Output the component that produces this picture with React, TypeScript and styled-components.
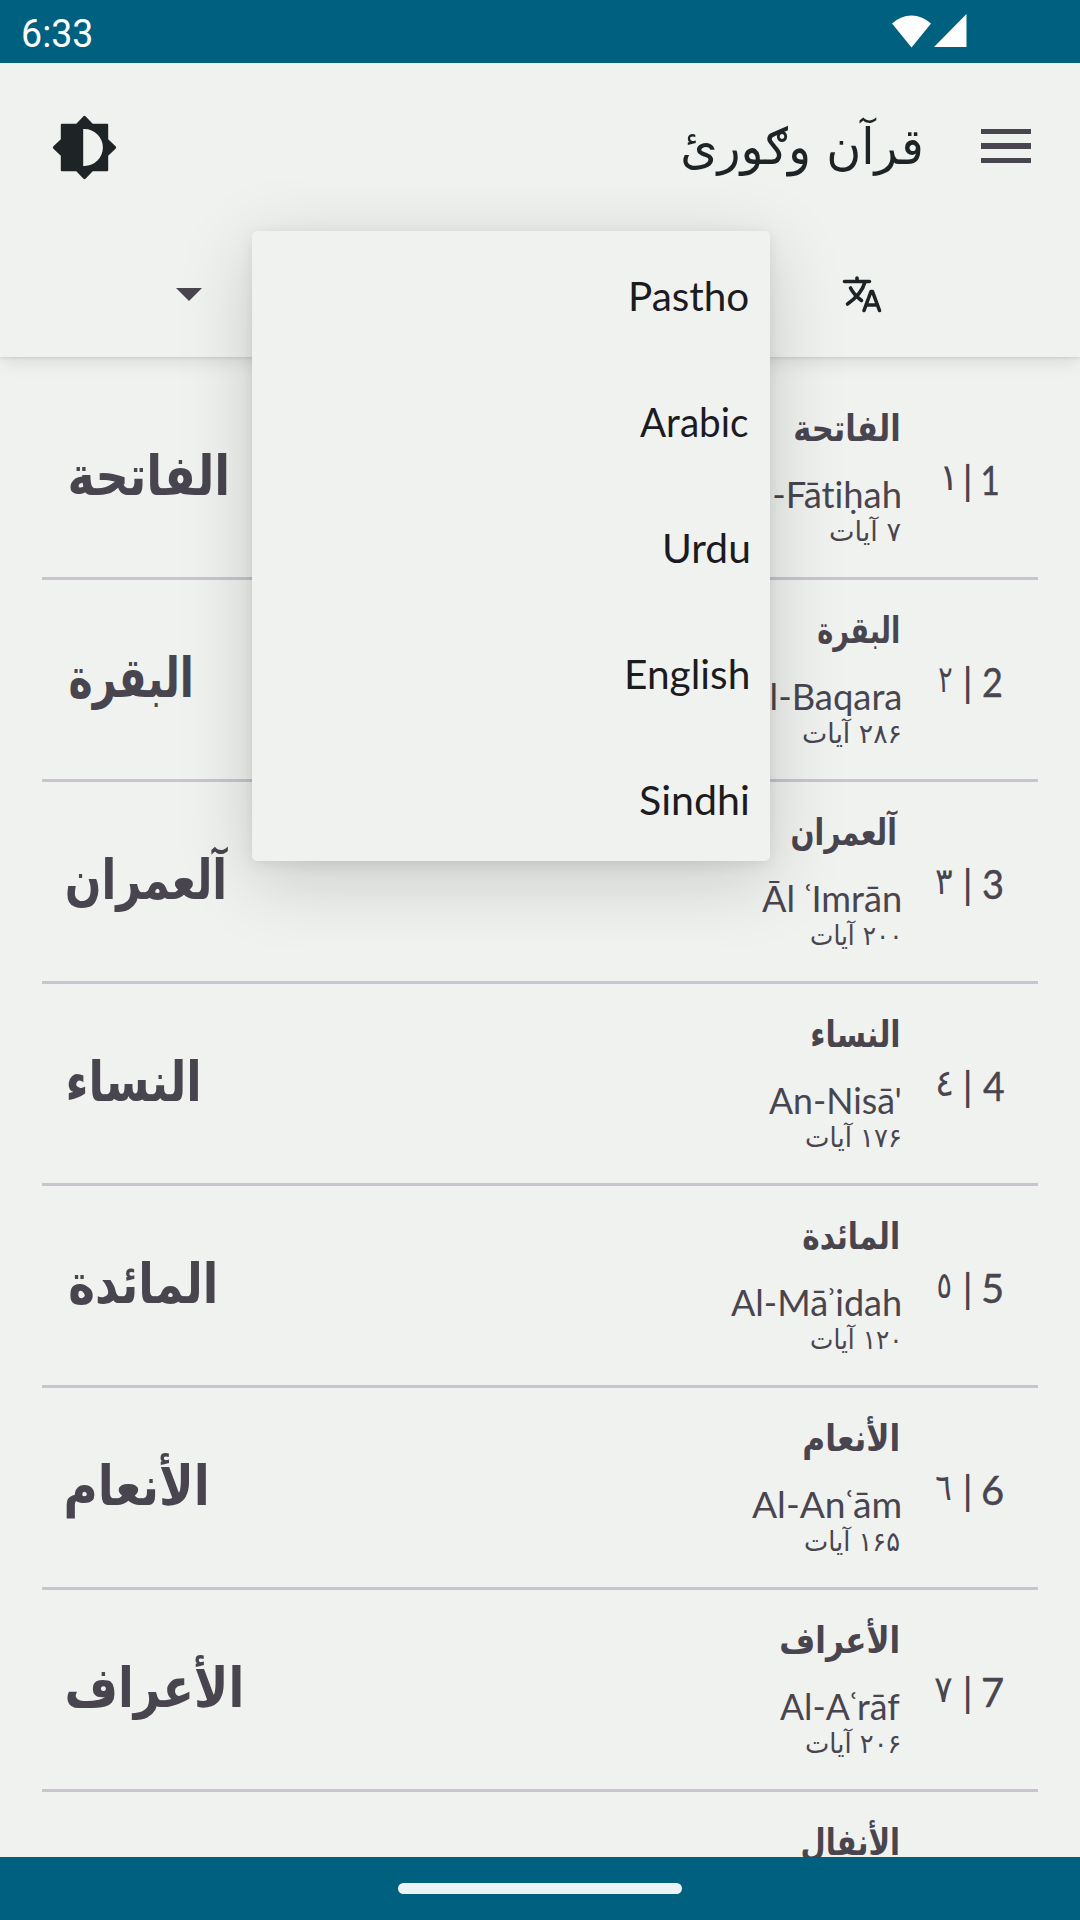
import React, { useLayoutEffect, useRef, useState } from 'react';
import styled, { createGlobalStyle } from 'styled-components';

const LATIN = `Lato, 'Noto Sans', sans-serif`;
const ARABIC = `'DejaVu Sans', sans-serif`;
const INK = '#49454f';
const DARK = '#1e2426';

const GlobalStyle = createGlobalStyle`
  * { box-sizing: border-box; }
  html, body { margin: 0; padding: 0; background: #f0f2ef; }
`;

const Screen = styled.div`
  width: 1080px;
  height: 1920px;
  display: flex;
  flex-direction: column;
  overflow: hidden;
  background: #f0f2ef;
  position: relative;
`;

const StatusBar = styled.header`
  height: 63px;
  flex: none;
  display: flex;
  align-items: flex-start;
  justify-content: space-between;
  padding: 0 113px 0 23px;
  background: #00607f;
  color: #fff;
  z-index: 2;
`;

const Clock = styled.div`
  font: 400 39px/68px Roboto, sans-serif;
`;

const StatusIcons = styled.div`
  display: flex;
  gap: 3px;
  padding-top: 14px;
`;

const AppHeader = styled.section`
  height: 294px;
  flex: none;
  background: #f0f2ef;
  box-shadow: 0 2px 20px rgba(0, 0, 0, 0.12), 0 1px 3px rgba(0, 0, 0, 0.1);
  z-index: 1;
`;

const TitleBar = styled.div`
  height: 168px;
  display: flex;
  align-items: center;
  padding: 0 49px 0 52px;
`;

const Title = styled.h1`
  margin: 0 60px 0 auto;
  font: 400 50px/60px ${ARABIC};
  color: ${DARK};
`;

const MenuIcon = styled.div`
  display: flex;
  flex-direction: column;
  gap: 9px;
  padding-bottom: 2px;
`;

const MenuLine = styled.span`
  width: 50px;
  height: 5.2px;
  background: ${INK};
`;

const FilterBar = styled.div`
  height: 126px;
  display: flex;
  align-items: center;
  justify-content: space-between;
  padding: 0 198px 0 175.5px;
`;

const Dropdown = styled.div`
  position: absolute;
  left: 252px;
  top: 231px;
  width: 518px;
  border-radius: 5px;
  background: #f0f2ef;
  box-shadow: 0 18px 74px rgba(0, 0, 0, 0.17), 0 3px 14px rgba(0, 0, 0, 0.08);
  z-index: 3;
`;

const Option = styled.div`
  height: 126px;
  display: flex;
  align-items: center;
  justify-content: flex-end;
  padding: 3px 22px 0 0;
  font: 400 41px/50px ${LATIN};
  color: #1c1b1f;
`;

const List = styled.main`
  flex: 1;
  min-height: 0;
  overflow: hidden;
  padding: 21px 42px 0;
`;

const Row = styled.article`
  height: 202px;
  display: flex;
  align-items: flex-start;
  justify-content: flex-end;
  border-bottom: 3px solid #c9c4d0;
  color: ${INK};
`;

const BigName = styled.div<{ $indent: number }>`
  flex: 1;
  padding: 64px 0 0 ${(p) => p.$indent}px;
  font: 700 55px/68px ${ARABIC};
`;

const Details = styled.div`
  display: flex;
  flex-direction: column;
  align-items: flex-end;
  padding-right: 1px;
`;

const ShortName = styled.div`
  padding: 26px 2px 0 0;
  font: 700 36.5px/50px ${ARABIC};
`;

const Translit = styled.div`
  margin-top: 15px;
  font: 400 36px/50px ${LATIN};
  font-variant-ligatures: none;
`;

const Verses = styled.div<{ $shift: number }>`
  margin-top: -10px;
  padding-right: ${(p) => p.$shift}px;
  font: 400 27px/46px ${ARABIC};
`;

const NumberCell = styled.div`
  width: 137px;
  display: grid;
  grid-template-columns: 51px 14px 1fr;
  column-gap: 4px;
  padding-top: 74px;
  font: 400 40px/56px ${LATIN};
`;

const ArabicDigit = styled.div<{ $shift: number }>`
  justify-self: end;
  padding-right: ${(p) => p.$shift}px;
  font: 400 37px/56px ${ARABIC};
  margin-top: -2px;
`;

const Bar = styled.div`
  padding-left: 9.5px;
  font-weight: 700;
`;

const Digit = styled.div`
  padding-left: 9px;
  -webkit-text-stroke: 0.4px ${INK};
`;

const NavBar = styled.footer`
  height: 63px;
  flex: none;
  display: flex;
  justify-content: center;
  padding-top: 26px;
  background: #00607f;
  z-index: 1;
`;

const Handle = styled.div`
  width: 284px;
  height: 11px;
  border-radius: 6px;
  background: #ebf3f6;
`;

const FitBox = styled.span`
  display: inline-block;
  direction: ltr;
  white-space: nowrap;
  vertical-align: top;
`;

const FitText = styled.span`
  display: inline-block;
  width: max-content;
  transform-origin: 0 50%;
`;

/** A line of text stretched horizontally so that its glyphs span `width` pixels. */
function Fit({ width, rtl, children }: { width: number; rtl?: boolean; children: string }) {
  const ref = useRef<HTMLSpanElement>(null);
  const [fit, setFit] = useState({ scale: 1, shift: 0 });
  useLayoutEffect(() => {
    const el = ref.current;
    const ctx = document.createElement('canvas').getContext('2d');
    if (!el || !ctx) return;
    const cs = getComputedStyle(el);
    ctx.font = `${cs.fontWeight} ${cs.fontSize} ${cs.fontFamily}`;
    ctx.direction = rtl ? 'rtl' : 'ltr';
    ctx.textAlign = 'left';
    const m = ctx.measureText(children);
    const ink = m.actualBoundingBoxLeft + m.actualBoundingBoxRight;
    if (ink > 0) setFit({ scale: width / ink, shift: m.actualBoundingBoxLeft });
  }, [width, rtl, children]);
  return (
    <FitBox style={{ width }}>
      <FitText ref={ref} dir={rtl ? 'rtl' : 'ltr'} style={{ transform: `scaleX(${fit.scale}) translateX(${fit.shift}px)` }}>
        {children}
      </FitText>
    </FitBox>
  );
}

const options = [
  { label: 'Pastho', w: 117 },
  { label: 'Arabic', w: 108 },
  { label: 'Urdu', w: 83 },
  { label: 'English', w: 121.5 },
  { label: 'Sindhi', w: 108 },
];

interface Surah {
  name: string;
  sw: number;
  full?: {
    n: string; nw: number;
    an: string; aw: number; as: number;
    bx: number; bw: number;
    tr: string; tw: number;
    v: string; vw: number; vs: number;
  };
}

const surahs: Surah[] = [
  { name: 'الفاتحة', sw: 103.5, full: { n: '1', nw: 15, an: '١', aw: 8, as: 0, bx: 70, bw: 157, tr: 'Al-Fātiḥah', tw: 161.5, v: '۷ آیات', vw: 70.5, vs: 0 } },
  { name: 'البقرة', sw: 80.5, full: { n: '2', nw: 18, an: '٢', aw: 13, as: 0, bx: 69.5, bw: 121, tr: 'Al-Baqara', tw: 155.5, v: '۲۸۶ آیات', vw: 97.5, vs: 0 } },
  { name: 'آلعمران', sw: 106, full: { n: '3', nw: 19, an: '٣', aw: 16, as: 0, bx: 67, bw: 161, tr: 'Āl ʿImrān', tw: 138, v: '۲۰۰ آیات', vw: 86.5, vs: 2.5 } },
  { name: 'النساء', sw: 86.5, full: { n: '4', nw: 21.5, an: '٤', aw: 13.5, as: 1, bx: 68, bw: 130.5, tr: "An-Nisā'", tw: 131.5, v: '۱۷۶ آیات', vw: 94.5, vs: 0 } },
  { name: 'المائدة', sw: 95, full: { n: '5', nw: 19, an: '٥', aw: 12.5, as: 2, bx: 69.5, bw: 145, tr: 'Al-Māʾidah', tw: 169, v: '۱۲۰ آیات', vw: 86.5, vs: 2.5 } },
  { name: 'الأنعام', sw: 94, full: { n: '6', nw: 20, an: '٦', aw: 15, as: 1, bx: 66, bw: 140.5, tr: 'Al-Anʿām', tw: 148.5, v: '۱۶۵ آیات', vw: 94.5, vs: 1 } },
  { name: 'الأعراف', sw: 117, full: { n: '7', nw: 20, an: '٧', aw: 17, as: -1, bx: 66.5, bw: 174, tr: 'Al-Aʿrāf', tw: 120, v: '۲۰۶ آیات', vw: 94, vs: 0 } },
  { name: 'الأنفال', sw: 96 },
];

function SurahRow({ name, sw, full }: Surah) {
  return (
    <Row>
      {full && <BigName $indent={full.bx - 42}><Fit width={full.bw} rtl>{name}</Fit></BigName>}
      <Details>
        <ShortName><Fit width={sw} rtl>{name}</Fit></ShortName>
        {full && <Translit><Fit width={full.tw}>{full.tr}</Fit></Translit>}
        {full && <Verses $shift={full.vs}><Fit width={full.vw} rtl>{full.v}</Fit></Verses>}
      </Details>
      <NumberCell>
        {full && (
          <>
            <ArabicDigit $shift={full.as}><Fit width={full.aw} rtl>{full.an}</Fit></ArabicDigit>
            <Bar><Fit width={4}>|</Fit></Bar>
            <Digit><Fit width={full.nw}>{full.n}</Fit></Digit>
          </>
        )}
      </NumberCell>
    </Row>
  );
}

export default function App() {
  return (
    <>
      <GlobalStyle />
      <Screen>
        <StatusBar>
          <Clock><Fit width={68.5}>6:33</Fit></Clock>
          <StatusIcons>
            <svg width="39" height="34" viewBox="0 0 39 34"><path d="M0 9.5A28 28 0 0 1 39 9.5L19.5 33.5Z" fill="#fff" /></svg>
            <svg width="33" height="34" viewBox="0 0 33 34"><path d="M32.5 0V33H0Z" fill="#fff" /></svg>
          </StatusIcons>
        </StatusBar>
        <AppHeader>
          <TitleBar>
            <svg width="65" height="65" viewBox="-32.5 -32.5 65 65">
              <path
                fill={DARK}
                fillRule="evenodd"
                d="M-1 -31.3Q0 -32 1 -31.3L8.2 -23.7H22.7Q23.7 -23.7 23.7 -22.7V-8.2L31.3 -1Q32 0 31.3 1L23.7 8.2V22.7Q23.7 23.7 22.7 23.7H8.2L1 31.3Q0 32 -1 31.3L-8.2 23.7H-22.7Q-23.7 23.7 -23.7 22.7V8.2L-31.3 1Q-32 0 -31.3 -1L-23.7 -8.2V-22.7Q-23.7 -23.7 -22.7 -23.7H-8.2ZM-1.3 -18.4V18.4H0A18.4 18.4 0 0 0 0 -18.4Z"
              />
            </svg>
            <Title><Fit width={238} rtl>قرآن وګورئ</Fit></Title>
            <MenuIcon><MenuLine /><MenuLine /><MenuLine /></MenuIcon>
          </TitleBar>
          <FilterBar>
            <svg width="26" height="13" viewBox="0 0 26 13"><path d="M0 0H26L13 13Z" fill={INK} /></svg>
            <svg width="42" height="40" viewBox="0 0 42 40" fill="none" stroke={DARK} strokeWidth="3.6" strokeLinecap="round" strokeLinejoin="round">
              <path d="M4.5 7.5H29.5M17 4V7.5M25 8C22.5 17 16 24 7.5 30M10.5 14C13.5 20 17.5 23.5 21.5 26.5" />
              <path d="M24 36.5L31 17.5H32.500L39.5 36.5M26.5 31H37" />
            </svg>
          </FilterBar>
        </AppHeader>
        <List>
          {surahs.map((s) => (
            <SurahRow key={s.name} {...s} />
          ))}
        </List>
        <NavBar><Handle /></NavBar>
        <Dropdown>
          {options.map((o) => (
            <Option key={o.label}><Fit width={o.w}>{o.label}</Fit></Option>
          ))}
        </Dropdown>
      </Screen>
    </>
  );
}
